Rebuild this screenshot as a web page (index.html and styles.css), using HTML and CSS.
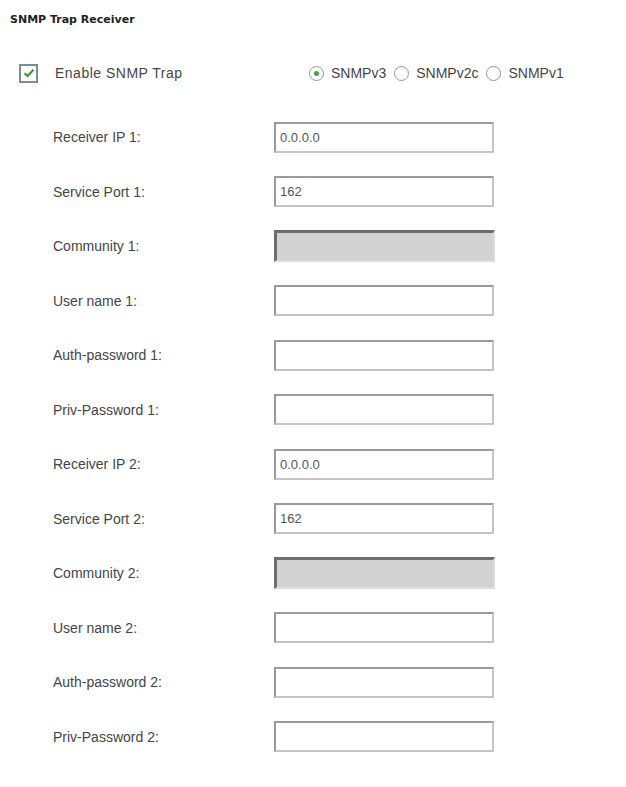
FILE: index.html
```html
<!DOCTYPE html>
<html lang="en">
<head>
  <meta charset="UTF-8">
  <title>SNMP Trap Receiver</title>
  <link rel="stylesheet" href="styles.css">
</head>
<body>

  <h2 class="title">SNMP Trap Receiver</h2>

  <div class="options">
    <label class="enable">
      <span class="check">
        <svg width="12" height="10" viewBox="0 0 12 10"><path d="M1.5 5.2 L4.5 8 L10.5 1.8" fill="none" stroke="#3a9a3a" stroke-width="2.2"/></svg>
      </span>
      Enable SNMP Trap
    </label>
    <div class="versions">
      <label class="ver"><span class="radio on"></span>SNMPv3</label>
      <label class="ver"><span class="radio"></span>SNMPv2c</label>
      <label class="ver"><span class="radio"></span>SNMPv1</label>
    </div>
  </div>

  <div class="form">
    <div class="row"><span class="lbl">Receiver IP 1:</span><div class="box">0.0.0.0</div></div>
    <div class="row"><span class="lbl">Service Port 1:</span><div class="box">162</div></div>
    <div class="row"><span class="lbl">Community 1:</span><div class="box off"></div></div>
    <div class="row"><span class="lbl">User name 1:</span><div class="box"></div></div>
    <div class="row"><span class="lbl">Auth-password 1:</span><div class="box"></div></div>
    <div class="row"><span class="lbl">Priv-Password 1:</span><div class="box"></div></div>
    <div class="row"><span class="lbl">Receiver IP 2:</span><div class="box">0.0.0.0</div></div>
    <div class="row"><span class="lbl">Service Port 2:</span><div class="box">162</div></div>
    <div class="row"><span class="lbl">Community 2:</span><div class="box off"></div></div>
    <div class="row"><span class="lbl">User name 2:</span><div class="box"></div></div>
    <div class="row"><span class="lbl">Auth-password 2:</span><div class="box"></div></div>
    <div class="row"><span class="lbl">Priv-Password 2:</span><div class="box"></div></div>
  </div>

</body>
</html>
```

FILE: styles.css
```css
body {
  margin: 0;
  background: #fff;
  font-family: "Liberation Sans", Arial, sans-serif;
  font-size: 14px;
  color: #454545;
}

.title {
  margin: 0;
  padding: 13px 0 0 10px;
  font-family: "DejaVu Sans", sans-serif;
  font-size: 11px;
  font-weight: bold;
  color: #222;
  height: 19px;
}

.options {
  display: flex;
  align-items: center;
  height: 44px;
  margin-top: 19px;
}

.enable {
  display: flex;
  align-items: center;
  width: 290px;
  padding-left: 19px;
  letter-spacing: 0.5px;
}

.check {
  width: 15px;
  height: 15px;
  border: 2px solid #7d8a99;
  margin-right: 17px;
  display: flex;
  align-items: center;
  justify-content: center;
}

.versions {
  display: flex;
  align-items: center;
}

.ver {
  display: flex;
  align-items: center;
  margin-right: 8px;
}

.radio {
  width: 13px;
  height: 13px;
  border: 1.5px solid #8a96a2;
  border-radius: 50%;
  margin-right: 7px;
  display: flex;
  align-items: center;
  justify-content: center;
}

.radio.on::after {
  content: "";
  width: 5px;
  height: 5px;
  border-radius: 50%;
  background: #3fa14a;
}

.form {
  padding-top: 15px;
}

.row {
  display: flex;
  align-items: center;
  height: 54.5px;
}

.lbl {
  width: 221px;
  padding-left: 53px;
}

.box {
  width: 212px;
  height: 27px;
  line-height: 27px;
  padding-left: 4px;
  border: 2px solid #c4c4c4;
  border-top-color: #9a9a9a;
  border-left-color: #9a9a9a;
  color: #555;
  font-size: 13px;
}

.box.off {
  background: #d2d2d2;
  border-top: 3px solid #6e6e6e;
  border-left: 3px solid #6e6e6e;
  border-right-color: #dcdcdc;
  border-bottom-color: #dcdcdc;
}
```
